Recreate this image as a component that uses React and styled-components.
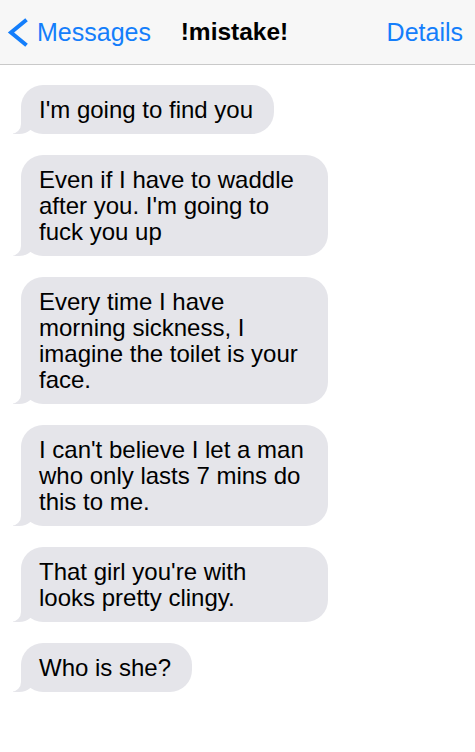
import styled, { createGlobalStyle } from "styled-components";

const messages = [
  "I'm going to find you",
  "Even if I have to waddle after you. I'm going to fuck you up",
  "Every time I have morning sickness, I imagine the toilet is your face.",
  "I can't believe I let a man who only lasts 7 mins do this to me.",
  "That girl you're with looks pretty clingy.",
  "Who is she?",
];

const GlobalStyle = createGlobalStyle`
  body {
    margin: 0;
    background: #fff;
    font-family: "Liberation Sans", Arial, sans-serif;
  }
`;

const BackIcon = () => (
  <svg width="22" height="30" viewBox="0 0 22 30" aria-hidden>
    <path
      d="M19 3 L5 14.5 L19 26"
      fill="none"
      stroke="currentColor"
      strokeWidth="4"
      strokeLinecap="square"
      strokeLinejoin="miter"
    />
  </svg>
);

export default function App() {
  return (
    <>
      <GlobalStyle />
      <Screen>
        <Header>
          <BackLink>
            <BackIcon />
            <span>Messages</span>
          </BackLink>
          <Title>!mistake!</Title>
          <DetailsLink>Details</DetailsLink>
        </Header>
        <Thread>
          {messages.map((text) => (
            <Bubble key={text}>{text}</Bubble>
          ))}
        </Thread>
      </Screen>
    </>
  );
}

const Screen = styled.div`
  width: 475px;
  min-height: 752px;
  background: #fff;
`;

const Header = styled.header`
  height: 64px;
  display: grid;
  grid-template-columns: 1fr auto 1fr;
  align-items: center;
  padding: 0 12px 0 6px;
  background: #f7f7f7;
  border-bottom: 1px solid #c9c9c9;
  font-size: 25px;
  color: #147efb;
`;

const BackLink = styled.a`
  display: flex;
  align-items: center;
  gap: 9px;
  justify-self: start;
  svg {
    margin-top: 1px;
  }
`;

const Title = styled.h1`
  margin: 0;
  font-size: 24.5px;
  font-weight: 700;
  color: #000;
`;

const DetailsLink = styled.a`
  justify-self: end;
`;

const Thread = styled.main`
  display: flex;
  flex-direction: column;
  align-items: flex-start;
  gap: 21px;
  padding: 20px 0 0 21px;
`;

const Bubble = styled.div`
  position: relative;
  max-width: 307px;
  box-sizing: border-box;
  padding: 12px 21px 11px 18px;
  border-radius: 22px;
  background: #e5e5ea;
  color: #000;
  font-size: 24px;
  line-height: 26px;

  &::before {
    content: "";
    position: absolute;
    z-index: 0;
    bottom: 0;
    left: -8px;
    height: 24px;
    width: 22px;
    background: #e5e5ea;
    border-bottom-right-radius: 16px 14px;
  }

  &::after {
    content: "";
    position: absolute;
    z-index: 1;
    bottom: 0;
    left: -26px;
    width: 26px;
    height: 24px;
    background: #fff;
    border-bottom-right-radius: 10px;
  }
`;
